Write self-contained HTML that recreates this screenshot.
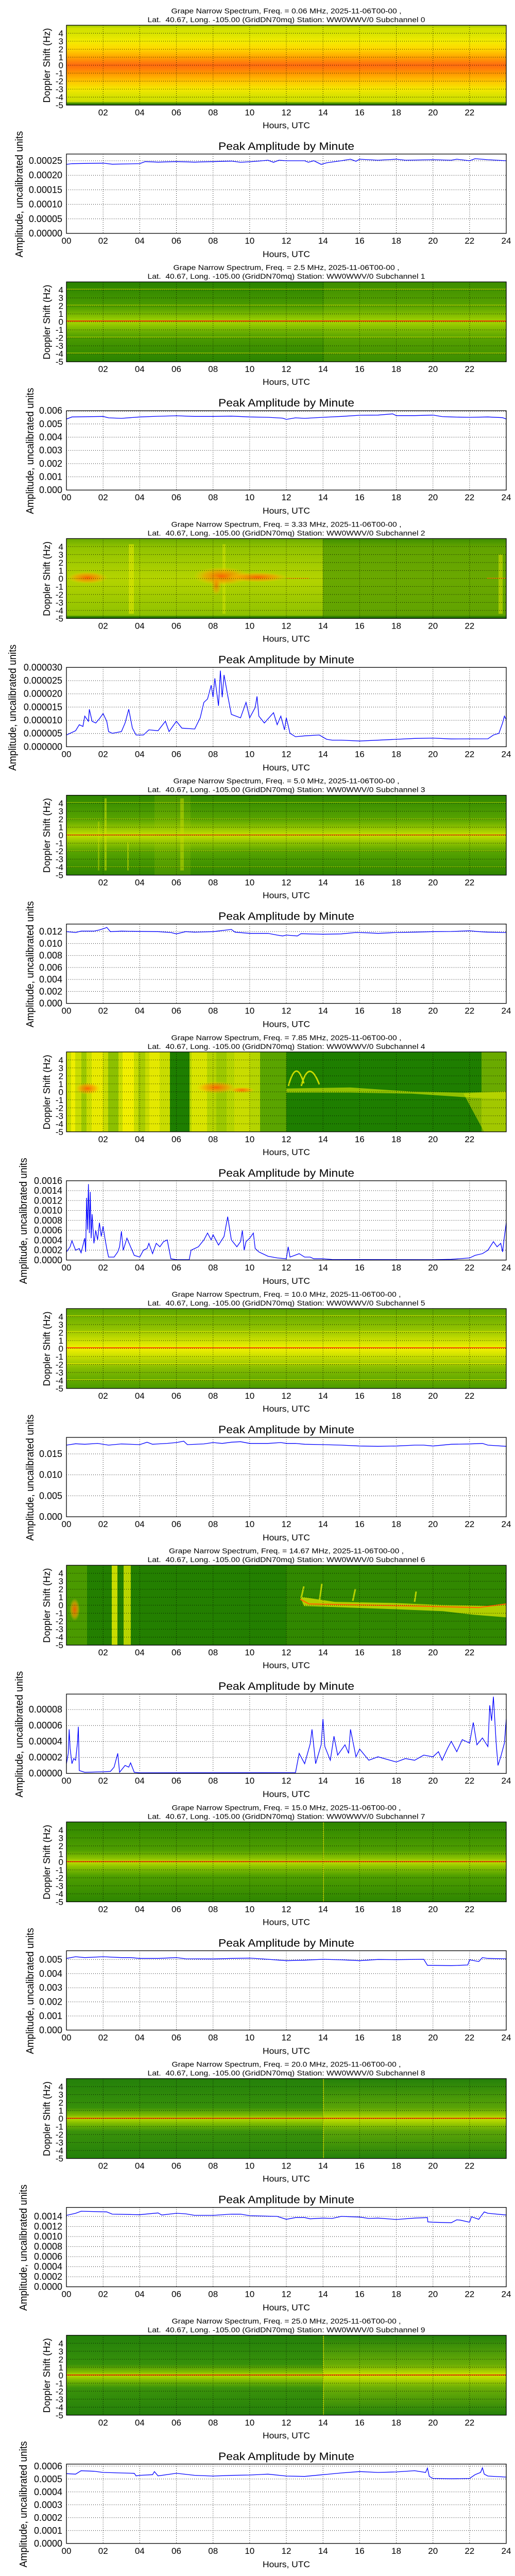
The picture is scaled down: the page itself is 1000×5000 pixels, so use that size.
<!DOCTYPE html>
<html><head><meta charset="utf-8">
<style>
html,body{margin:0;padding:0;background:#fff;}
svg{display:block;}
text{font-family:"Liberation Sans",sans-serif;fill:#000;}
.t{font-size:14px;text-anchor:middle;white-space:pre;}
.yl text{font-size:17px;text-anchor:end;}
.xl text{font-size:17px;text-anchor:middle;}
.ly text{font-size:18px;text-anchor:end;}
.ax{font-size:17px;text-anchor:middle;}
.pt{font-size:21px;text-anchor:middle;}
.dl{font-size:18px;text-anchor:middle;}
.al{font-size:20px;text-anchor:middle;}
.grid line{stroke:#000;stroke-width:1;stroke-dasharray:1,3;}
.ln{fill:none;stroke:#0000ff;stroke-width:1.3;}
</style></head>
<body>
<svg width="1000" height="5000" viewBox="0 0 1000 5000" xmlns="http://www.w3.org/2000/svg">
<defs>
<clipPath id="sc"><rect x="129" y="49" width="854" height="155"/></clipPath>
<clipPath id="lc"><rect x="129" y="299" width="854" height="154"/></clipPath>
<linearGradient id="g0" x1="0" y1="0" x2="0" y2="1">
<stop offset="0" stop-color="#9cc800"/><stop offset="0.04" stop-color="#d4e200"/><stop offset="0.1" stop-color="#d6e200"/><stop offset="0.2" stop-color="#f2ec00"/><stop offset="0.3" stop-color="#ffd600"/><stop offset="0.4" stop-color="#ffa400"/><stop offset="0.5" stop-color="#ff6a10"/><stop offset="0.6" stop-color="#ff9600"/><stop offset="0.7" stop-color="#ffc400"/><stop offset="0.8" stop-color="#f4e800"/><stop offset="0.9" stop-color="#d4e000"/><stop offset="0.955" stop-color="#d0e000"/><stop offset="0.975" stop-color="#4a9400"/><stop offset="1" stop-color="#1a6a00"/>
</linearGradient>
<linearGradient id="g1" x1="0" y1="0" x2="0" y2="1">
<stop offset="0" stop-color="#2a8200"/><stop offset="0.3" stop-color="#4a9a00"/><stop offset="0.44" stop-color="#88c200"/><stop offset="0.5" stop-color="#a8d400"/><stop offset="0.56" stop-color="#88c200"/><stop offset="0.7" stop-color="#4a9a00"/><stop offset="1" stop-color="#2a8200"/>
</linearGradient>
<linearGradient id="g2" x1="0" y1="0" x2="0" y2="1">
<stop offset="0" stop-color="#6aaa00"/><stop offset="0.1" stop-color="#90c200"/><stop offset="0.5" stop-color="#b4d400"/><stop offset="0.9" stop-color="#94c400"/><stop offset="0.96" stop-color="#8cc000"/><stop offset="0.98" stop-color="#2a7a00"/><stop offset="1" stop-color="#1e6e00"/>
</linearGradient>
<linearGradient id="g2b" x1="0" y1="0" x2="0" y2="1">
<stop offset="0" stop-color="#3e8e00"/><stop offset="0.1" stop-color="#62a400"/><stop offset="0.5" stop-color="#6aa800"/><stop offset="0.9" stop-color="#62a400"/><stop offset="0.96" stop-color="#5ea000"/><stop offset="0.98" stop-color="#2a7a00"/><stop offset="1" stop-color="#1e6e00"/>
</linearGradient>
<linearGradient id="g3" x1="0" y1="0" x2="0" y2="1">
<stop offset="0" stop-color="#2e8600"/><stop offset="0.3" stop-color="#58a400"/><stop offset="0.44" stop-color="#a0cc00"/><stop offset="0.5" stop-color="#c4e000"/><stop offset="0.56" stop-color="#a0cc00"/><stop offset="0.7" stop-color="#58a400"/><stop offset="1" stop-color="#2e8600"/>
</linearGradient>
<linearGradient id="g5" x1="0" y1="0" x2="0" y2="1">
<stop offset="0" stop-color="#5aa400"/><stop offset="0.25" stop-color="#90c200"/><stop offset="0.42" stop-color="#d4e400"/><stop offset="0.5" stop-color="#f2f000"/><stop offset="0.58" stop-color="#d0e200"/><stop offset="0.75" stop-color="#84bc00"/><stop offset="1" stop-color="#4c9c00"/>
</linearGradient>
<linearGradient id="g7" x1="0" y1="0" x2="0" y2="1">
<stop offset="0" stop-color="#2e8600"/><stop offset="0.35" stop-color="#4e9e00"/><stop offset="0.46" stop-color="#8cc400"/><stop offset="0.5" stop-color="#c0dc00"/><stop offset="0.56" stop-color="#8cc400"/><stop offset="0.68" stop-color="#4e9e00"/><stop offset="1" stop-color="#2e8600"/>
</linearGradient>
<linearGradient id="g8" x1="0" y1="0" x2="0" y2="1">
<stop offset="0" stop-color="#24800a"/><stop offset="0.36" stop-color="#36900a"/><stop offset="0.46" stop-color="#80bc00"/><stop offset="0.5" stop-color="#b8da00"/><stop offset="0.56" stop-color="#80bc00"/><stop offset="0.66" stop-color="#3a920a"/><stop offset="1" stop-color="#24800a"/>
</linearGradient>
<linearGradient id="gb" x1="0" y1="0" x2="0" y2="1">
<stop offset="0" stop-color="#b0d400" stop-opacity="0"/><stop offset="0.4" stop-color="#b0d400" stop-opacity="0.45"/><stop offset="0.5" stop-color="#d0e400" stop-opacity="0.8"/><stop offset="0.62" stop-color="#b0d400" stop-opacity="0.45"/><stop offset="1" stop-color="#b0d400" stop-opacity="0"/>
</linearGradient>
<radialGradient id="ob" cx="0.5" cy="0.5" r="0.5">
<stop offset="0" stop-color="#ff5a00" stop-opacity="0.9"/><stop offset="0.6" stop-color="#ff9a00" stop-opacity="0.6"/><stop offset="1" stop-color="#ffd000" stop-opacity="0"/>
</radialGradient>
<g id="sg">
<g class="grid">
<line x1="200.2" y1="49" x2="200.2" y2="204"/><line x1="271.3" y1="49" x2="271.3" y2="204"/><line x1="342.5" y1="49" x2="342.5" y2="204"/><line x1="413.7" y1="49" x2="413.7" y2="204"/><line x1="484.8" y1="49" x2="484.8" y2="204"/><line x1="556" y1="49" x2="556" y2="204"/><line x1="627.2" y1="49" x2="627.2" y2="204"/><line x1="698.3" y1="49" x2="698.3" y2="204"/><line x1="769.5" y1="49" x2="769.5" y2="204"/><line x1="840.7" y1="49" x2="840.7" y2="204"/><line x1="911.8" y1="49" x2="911.8" y2="204"/>
<line x1="129" y1="64.5" x2="983" y2="64.5"/><line x1="129" y1="80" x2="983" y2="80"/><line x1="129" y1="95.5" x2="983" y2="95.5"/><line x1="129" y1="111" x2="983" y2="111"/><line x1="129" y1="126.5" x2="983" y2="126.5"/><line x1="129" y1="142" x2="983" y2="142"/><line x1="129" y1="157.5" x2="983" y2="157.5"/><line x1="129" y1="173" x2="983" y2="173"/><line x1="129" y1="188.5" x2="983" y2="188.5"/>
</g>
<rect x="129" y="49" width="854" height="155" fill="none" stroke="#000" stroke-width="1.3"/>
</g>
<g id="lgx" class="grid">
<line x1="200.2" y1="299" x2="200.2" y2="453"/><line x1="271.3" y1="299" x2="271.3" y2="453"/><line x1="342.5" y1="299" x2="342.5" y2="453"/><line x1="413.7" y1="299" x2="413.7" y2="453"/><line x1="484.8" y1="299" x2="484.8" y2="453"/><line x1="556" y1="299" x2="556" y2="453"/><line x1="627.2" y1="299" x2="627.2" y2="453"/><line x1="698.3" y1="299" x2="698.3" y2="453"/><line x1="769.5" y1="299" x2="769.5" y2="453"/><line x1="840.7" y1="299" x2="840.7" y2="453"/><line x1="911.8" y1="299" x2="911.8" y2="453"/>
</g>
<rect id="lf" x="129" y="299" width="854" height="154" fill="none" stroke="#000" stroke-width="1.3"/>
</defs>

<!-- ================= PANEL 0 ================= -->
<g transform="translate(0,0)">
<text class="t" x="556" y="26" textLength="447" lengthAdjust="spacingAndGlyphs">Grape Narrow Spectrum, Freq. = 0.06 MHz, 2025-11-06T00-00 ,</text>
<text class="t" x="556" y="43" textLength="539" lengthAdjust="spacingAndGlyphs">Lat.  40.67, Long. -105.00 (GridDN70mq) Station: WW0WWV/0 Subchannel 0</text>
<g clip-path="url(#sc)"><rect x="129" y="49" width="854" height="155" fill="url(#g0)"/></g>
<use href="#sg"/>
<g class="yl"><text x="123" y="70.5">4</text><text x="123" y="86">3</text><text x="123" y="101.5">2</text><text x="123" y="117">1</text><text x="123" y="132.5">0</text><text x="123" y="148">-1</text><text x="123" y="163.5">-2</text><text x="123" y="179">-3</text><text x="123" y="194.5">-4</text><text x="123" y="210">-5</text></g>
<g class="xl"><text x="200.2" y="224">02</text><text x="271.3" y="224">04</text><text x="342.5" y="224">06</text><text x="413.7" y="224">08</text><text x="484.8" y="224">10</text><text x="556" y="224">12</text><text x="627.2" y="224">14</text><text x="698.3" y="224">16</text><text x="769.5" y="224">18</text><text x="840.7" y="224">20</text><text x="911.8" y="224">22</text></g>
<text class="ax" x="556" y="249" textLength="92" lengthAdjust="spacingAndGlyphs">Hours, UTC</text>
<text class="dl" transform="translate(97,127) rotate(-90)" textLength="145" lengthAdjust="spacingAndGlyphs">Doppler Shift (Hz)</text>
<text class="pt" x="556" y="291" textLength="264" lengthAdjust="spacingAndGlyphs">Peak Amplitude by Minute</text>
<use href="#lgx"/>
<g class="grid"><line x1="129" y1="424.8" x2="983" y2="424.8"/><line x1="129" y1="396.6" x2="983" y2="396.6"/><line x1="129" y1="368.4" x2="983" y2="368.4"/><line x1="129" y1="340.2" x2="983" y2="340.2"/><line x1="129" y1="312" x2="983" y2="312"/></g>
<g clip-path="url(#lc)"><g transform="translate(129,0) scale(35.583,0.33333)"><polyline class="ln" vector-effect="non-scaling-stroke" points="0,957 0.3,953 2,950 2.5,956 4,953 4.3,941 5,944 6,941 7,944 8,941 9,938 9.5,945 10,942 10.5,938 11,933 11.3,945 11.6,933 12,936 13,936 13.2,945 13.5,936 13.9,957 14.2,948 15,936 15.5,927 15.8,939 16,927 17,933 18,927 18.5,933 20,930 21,933 21.3,927 22,936 22.3,924 23,930 24,936"/></g></g>
<use href="#lf"/>
<g class="ly"><text x="121" y="459">0.00000</text><text x="121" y="430.8">0.00005</text><text x="121" y="402.6">0.00010</text><text x="121" y="374.4">0.00015</text><text x="121" y="346.2">0.00020</text><text x="121" y="318">0.00025</text></g>
<g class="xl"><text x="129" y="473">00</text><text x="200.2" y="473">02</text><text x="271.3" y="473">04</text><text x="342.5" y="473">06</text><text x="413.7" y="473">08</text><text x="484.8" y="473">10</text><text x="556" y="473">12</text><text x="627.2" y="473">14</text><text x="698.3" y="473">16</text><text x="769.5" y="473">18</text><text x="840.7" y="473">20</text><text x="911.8" y="473">22</text><text x="983" y="473">24</text></g>
<text class="ax" x="556" y="499" textLength="92" lengthAdjust="spacingAndGlyphs">Hours, UTC</text>
<text class="al" transform="translate(44,377) rotate(-90)" textLength="245" lengthAdjust="spacingAndGlyphs">Amplitude, uncalibrated units</text>
</g>

<!-- ================= PANEL 1 ================= -->
<g transform="translate(0,498.2)">
<text class="t" x="556" y="26" textLength="439" lengthAdjust="spacingAndGlyphs">Grape Narrow Spectrum, Freq. = 2.5 MHz, 2025-11-06T00-00 ,</text>
<text class="t" x="556" y="43" textLength="539" lengthAdjust="spacingAndGlyphs">Lat.  40.67, Long. -105.00 (GridDN70mq) Station: WW0WWV/0 Subchannel 1</text>
<g clip-path="url(#sc)"><rect x="129" y="49" width="854" height="155" fill="url(#g1)"/>
<rect x="629" y="49" width="354" height="155" fill="#a8d000" opacity="0.15"/>
<line x1="129" y1="63" x2="983" y2="63" stroke="#c8dc00" stroke-width="1"/><line x1="129" y1="94" x2="983" y2="94" stroke="#c8dc00" stroke-width="1"/><line x1="129" y1="156" x2="983" y2="156" stroke="#c8dc00" stroke-width="1"/><line x1="129" y1="187" x2="983" y2="187" stroke="#c8dc00" stroke-width="1"/>
<line x1="129" y1="125" x2="983" y2="125" stroke="#ff1a00" stroke-width="1.6"/></g>
<use href="#sg"/>
<g class="yl"><text x="123" y="70.5">4</text><text x="123" y="86">3</text><text x="123" y="101.5">2</text><text x="123" y="117">1</text><text x="123" y="132.5">0</text><text x="123" y="148">-1</text><text x="123" y="163.5">-2</text><text x="123" y="179">-3</text><text x="123" y="194.5">-4</text><text x="123" y="210">-5</text></g>
<g class="xl"><text x="200.2" y="224">02</text><text x="271.3" y="224">04</text><text x="342.5" y="224">06</text><text x="413.7" y="224">08</text><text x="484.8" y="224">10</text><text x="556" y="224">12</text><text x="627.2" y="224">14</text><text x="698.3" y="224">16</text><text x="769.5" y="224">18</text><text x="840.7" y="224">20</text><text x="911.8" y="224">22</text></g>
<text class="ax" x="556" y="249" textLength="92" lengthAdjust="spacingAndGlyphs">Hours, UTC</text>
<text class="dl" transform="translate(97,127) rotate(-90)" textLength="145" lengthAdjust="spacingAndGlyphs">Doppler Shift (Hz)</text>
<text class="pt" x="556" y="291" textLength="264" lengthAdjust="spacingAndGlyphs">Peak Amplitude by Minute</text>
<use href="#lgx"/>
<g class="grid"><line x1="129" y1="427.3" x2="983" y2="427.3"/><line x1="129" y1="401.7" x2="983" y2="401.7"/><line x1="129" y1="376" x2="983" y2="376"/><line x1="129" y1="350.3" x2="983" y2="350.3"/><line x1="129" y1="324.7" x2="983" y2="324.7"/><line x1="129" y1="300" x2="983" y2="300"/></g>
<g clip-path="url(#lc)"><g transform="translate(129,1.8) scale(35.583,0.33333)"><polyline class="ln" vector-effect="non-scaling-stroke" points="0,940 0.3,928 2,925 2.3,933 3,936 4,928 5,924 6,921 7,925 8,925 9,923 10,928 11,930 11.8,935 12,942 12.5,933 13,936 14,930 15,925 16,918 17,917 17.8,910 18,920 19,920 20,917 20.5,926 21,928 22,930 23,928 23.8,932 24,940"/></g></g>
<use href="#lf"/>
<g class="ly"><text x="121" y="459">0.000</text><text x="121" y="433.3">0.001</text><text x="121" y="407.7">0.002</text><text x="121" y="382">0.003</text><text x="121" y="356.3">0.004</text><text x="121" y="330.7">0.005</text><text x="121" y="305">0.006</text></g>
<g class="xl"><text x="129" y="473">00</text><text x="200.2" y="473">02</text><text x="271.3" y="473">04</text><text x="342.5" y="473">06</text><text x="413.7" y="473">08</text><text x="484.8" y="473">10</text><text x="556" y="473">12</text><text x="627.2" y="473">14</text><text x="698.3" y="473">16</text><text x="769.5" y="473">18</text><text x="840.7" y="473">20</text><text x="911.8" y="473">22</text><text x="983" y="473">24</text></g>
<text class="ax" x="556" y="499" textLength="92" lengthAdjust="spacingAndGlyphs">Hours, UTC</text>
<text class="al" transform="translate(65,377) rotate(-90)" textLength="245" lengthAdjust="spacingAndGlyphs">Amplitude, uncalibrated units</text>
</g>

<!-- ================= PANEL 2 ================= -->
<g transform="translate(0,996.4)">
<text class="t" x="556" y="26" textLength="447" lengthAdjust="spacingAndGlyphs">Grape Narrow Spectrum, Freq. = 3.33 MHz, 2025-11-06T00-00 ,</text>
<text class="t" x="556" y="43" textLength="539" lengthAdjust="spacingAndGlyphs">Lat.  40.67, Long. -105.00 (GridDN70mq) Station: WW0WWV/0 Subchannel 2</text>
<g clip-path="url(#sc)"><rect x="129" y="49" width="500" height="155" fill="url(#g2)"/><rect x="627" y="49" width="356" height="155" fill="url(#g2b)"/>
<rect x="250" y="60" width="10" height="135" fill="#e0e800" opacity="0.6"/>
<rect x="432" y="60" width="6" height="135" fill="#d8e600" opacity="0.5"/>
<rect x="968" y="80" width="8" height="115" fill="#d0e000" opacity="0.6"/>
<ellipse cx="170" cy="125" rx="40" ry="12" fill="url(#ob)"/>
<ellipse cx="430" cy="122" rx="55" ry="18" fill="url(#ob)"/>
<ellipse cx="420" cy="140" rx="10" ry="20" fill="url(#ob)" opacity="0.7"/>
<ellipse cx="500" cy="124" rx="60" ry="10" fill="url(#ob)"/>
<line x1="556" y1="126" x2="600" y2="126" stroke="#ff8000" stroke-width="1"/>
<line x1="945" y1="126" x2="983" y2="126" stroke="#ff8000" stroke-width="1.3"/></g>
<use href="#sg"/>
<g class="yl"><text x="123" y="70.5">4</text><text x="123" y="86">3</text><text x="123" y="101.5">2</text><text x="123" y="117">1</text><text x="123" y="132.5">0</text><text x="123" y="148">-1</text><text x="123" y="163.5">-2</text><text x="123" y="179">-3</text><text x="123" y="194.5">-4</text><text x="123" y="210">-5</text></g>
<g class="xl"><text x="200.2" y="224">02</text><text x="271.3" y="224">04</text><text x="342.5" y="224">06</text><text x="413.7" y="224">08</text><text x="484.8" y="224">10</text><text x="556" y="224">12</text><text x="627.2" y="224">14</text><text x="698.3" y="224">16</text><text x="769.5" y="224">18</text><text x="840.7" y="224">20</text><text x="911.8" y="224">22</text></g>
<text class="ax" x="556" y="249" textLength="92" lengthAdjust="spacingAndGlyphs">Hours, UTC</text>
<text class="dl" transform="translate(97,127) rotate(-90)" textLength="145" lengthAdjust="spacingAndGlyphs">Doppler Shift (Hz)</text>
<text class="pt" x="556" y="291" textLength="264" lengthAdjust="spacingAndGlyphs">Peak Amplitude by Minute</text>
<use href="#lgx"/>
<g class="grid"><line x1="129" y1="427.3" x2="983" y2="427.3"/><line x1="129" y1="401.7" x2="983" y2="401.7"/><line x1="129" y1="376" x2="983" y2="376"/><line x1="129" y1="350.3" x2="983" y2="350.3"/><line x1="129" y1="324.7" x2="983" y2="324.7"/></g>
<g clip-path="url(#lc)"><g transform="translate(129,3.6) scale(35.583,0.33333)"><polyline class="ln" vector-effect="non-scaling-stroke" points="0,1280 0.5,1255 0.7,1220 0.9,1230 1.0,1170 1.2,1200 1.25,1130 1.4,1200 1.6,1210 1.8,1185 2.0,1155 2.2,1200 2.3,1260 2.5,1270 3,1260 3.2,1210 3.4,1130 3.6,1240 3.8,1280 4.2,1280 4.5,1250 5,1255 5.4,1200 5.6,1260 6,1200 6.3,1240 7,1245 7.3,1180 7.5,1090 7.7,1070 7.9,990 8.0,1060 8.1,950 8.3,1110 8.4,905 8.5,1060 8.6,930 8.8,1050 9,1160 9.5,1180 9.8,1090 10,1180 10.3,1120 10.4,1055 10.5,1170 10.8,1210 11.3,1150 11.5,1220 11.7,1170 11.9,1250 12,1180 12.2,1270 12.5,1290 13,1285 13.8,1280 14.2,1305 14.5,1310 15,1310 16,1315 18,1305 19,1300 20,1298 21,1303 23,1302 23.3,1280 23.6,1270 23.8,1210 23.9,1170 24,1190"/></g></g>
<use href="#lf"/>
<g class="ly"><text x="121" y="459">0.000000</text><text x="121" y="433.3">0.000005</text><text x="121" y="407.7">0.000010</text><text x="121" y="382">0.000015</text><text x="121" y="356.3">0.000020</text><text x="121" y="330.7">0.000025</text><text x="121" y="305">0.000030</text></g>
<g class="xl"><text x="129" y="473">00</text><text x="200.2" y="473">02</text><text x="271.3" y="473">04</text><text x="342.5" y="473">06</text><text x="413.7" y="473">08</text><text x="484.8" y="473">10</text><text x="556" y="473">12</text><text x="627.2" y="473">14</text><text x="698.3" y="473">16</text><text x="769.5" y="473">18</text><text x="840.7" y="473">20</text><text x="911.8" y="473">22</text><text x="983" y="473">24</text></g>
<text class="ax" x="556" y="499" textLength="92" lengthAdjust="spacingAndGlyphs">Hours, UTC</text>
<text class="al" transform="translate(31,377) rotate(-90)" textLength="245" lengthAdjust="spacingAndGlyphs">Amplitude, uncalibrated units</text>
</g>

<!-- ================= PANEL 3 ================= -->
<g transform="translate(0,1494.6)">
<text class="t" x="556" y="26" textLength="439" lengthAdjust="spacingAndGlyphs">Grape Narrow Spectrum, Freq. = 5.0 MHz, 2025-11-06T00-00 ,</text>
<text class="t" x="556" y="43" textLength="539" lengthAdjust="spacingAndGlyphs">Lat.  40.67, Long. -105.00 (GridDN70mq) Station: WW0WWV/0 Subchannel 3</text>
<g clip-path="url(#sc)"><rect x="129" y="49" width="854" height="155" fill="url(#g3)"/>
<rect x="300" y="49" width="70" height="155" fill="#b0d400" opacity="0.18"/>
<rect x="203" y="55" width="4" height="140" fill="#d0e000" opacity="0.55"/><rect x="190" y="100" width="3" height="95" fill="#d0e000" opacity="0.4"/><rect x="247" y="140" width="3" height="55" fill="#d0e000" opacity="0.5"/><rect x="350" y="55" width="7" height="140" fill="#c8dc00" opacity="0.5"/>
<line x1="129" y1="63" x2="983" y2="63" stroke="#c0d800" stroke-width="0.8"/><line x1="129" y1="95" x2="983" y2="95" stroke="#c0d800" stroke-width="0.8"/><line x1="129" y1="157" x2="983" y2="157" stroke="#c0d800" stroke-width="0.8"/><line x1="129" y1="188" x2="983" y2="188" stroke="#c0d800" stroke-width="0.8"/>
<line x1="129" y1="126" x2="983" y2="126" stroke="#ff2000" stroke-width="1.2"/></g>
<use href="#sg"/>
<g class="yl"><text x="123" y="70.5">4</text><text x="123" y="86">3</text><text x="123" y="101.5">2</text><text x="123" y="117">1</text><text x="123" y="132.5">0</text><text x="123" y="148">-1</text><text x="123" y="163.5">-2</text><text x="123" y="179">-3</text><text x="123" y="194.5">-4</text><text x="123" y="210">-5</text></g>
<g class="xl"><text x="200.2" y="224">02</text><text x="271.3" y="224">04</text><text x="342.5" y="224">06</text><text x="413.7" y="224">08</text><text x="484.8" y="224">10</text><text x="556" y="224">12</text><text x="627.2" y="224">14</text><text x="698.3" y="224">16</text><text x="769.5" y="224">18</text><text x="840.7" y="224">20</text><text x="911.8" y="224">22</text></g>
<text class="ax" x="556" y="249" textLength="92" lengthAdjust="spacingAndGlyphs">Hours, UTC</text>
<text class="dl" transform="translate(97,127) rotate(-90)" textLength="145" lengthAdjust="spacingAndGlyphs">Doppler Shift (Hz)</text>
<text class="pt" x="556" y="291" textLength="264" lengthAdjust="spacingAndGlyphs">Peak Amplitude by Minute</text>
<use href="#lgx"/>
<g class="grid"><line x1="129" y1="429.8" x2="983" y2="429.8"/><line x1="129" y1="406.5" x2="983" y2="406.5"/><line x1="129" y1="383.3" x2="983" y2="383.3"/><line x1="129" y1="360" x2="983" y2="360"/><line x1="129" y1="336.8" x2="983" y2="336.8"/><line x1="129" y1="313.5" x2="983" y2="313.5"/></g>
<g clip-path="url(#lc)"><g transform="translate(129,5.4) scale(35.583,0.33333)"><polyline class="ln" vector-effect="non-scaling-stroke" points="0,925 0.5,930 0.8,922 1.5,922 1.8,915 2.1,905 2.2,900 2.4,925 3,922 5,925 5.7,930 6,938 6.5,925 7,928 8,925 9,912 9.2,928 10,935 11,935 11.5,945 11.8,950 12,945 12.6,950 12.8,937 14,940 15,938 15.8,930 16.5,932 17,935 18,930 19,928 20,925 21,924 22,920 22.5,925 23,928 24,930"/></g></g>
<use href="#lf"/>
<g class="ly"><text x="121" y="459">0.000</text><text x="121" y="435.8">0.002</text><text x="121" y="412.5">0.004</text><text x="121" y="389.3">0.006</text><text x="121" y="366">0.008</text><text x="121" y="342.8">0.010</text><text x="121" y="319.5">0.012</text></g>
<g class="xl"><text x="129" y="473">00</text><text x="200.2" y="473">02</text><text x="271.3" y="473">04</text><text x="342.5" y="473">06</text><text x="413.7" y="473">08</text><text x="484.8" y="473">10</text><text x="556" y="473">12</text><text x="627.2" y="473">14</text><text x="698.3" y="473">16</text><text x="769.5" y="473">18</text><text x="840.7" y="473">20</text><text x="911.8" y="473">22</text><text x="983" y="473">24</text></g>
<text class="ax" x="556" y="499" textLength="92" lengthAdjust="spacingAndGlyphs">Hours, UTC</text>
<text class="al" transform="translate(65,377) rotate(-90)" textLength="245" lengthAdjust="spacingAndGlyphs">Amplitude, uncalibrated units</text>
</g>

<!-- ================= PANEL 4 ================= -->
<g transform="translate(0,1992.8)">
<text class="t" x="556" y="26" textLength="447" lengthAdjust="spacingAndGlyphs">Grape Narrow Spectrum, Freq. = 7.85 MHz, 2025-11-06T00-00 ,</text>
<text class="t" x="556" y="43" textLength="539" lengthAdjust="spacingAndGlyphs">Lat.  40.67, Long. -105.00 (GridDN70mq) Station: WW0WWV/0 Subchannel 4</text>
<g clip-path="url(#sc)"><rect x="129" y="49" width="854" height="155" fill="#1e7e00"/>
<rect x="129" y="49" width="201" height="155" fill="#c8dc00"/>
<rect x="138" y="49" width="8" height="155" fill="#eeee00"/><rect x="158" y="49" width="10" height="155" fill="#9cc800"/><rect x="178" y="49" width="22" height="155" fill="#e8ea00"/><rect x="210" y="49" width="20" height="155" fill="#8cc000"/><rect x="238" y="49" width="22" height="155" fill="#f0ee00"/><rect x="268" y="49" width="14" height="155" fill="#a8cc00"/><rect x="290" y="49" width="20" height="155" fill="#e4e800"/>
<rect x="368" y="49" width="188" height="155" fill="#b4d400"/>
<rect x="372" y="49" width="30" height="155" fill="#d8e400"/><rect x="420" y="49" width="20" height="155" fill="#9cc800"/><rect x="455" y="49" width="30" height="155" fill="#c8dc00"/><rect x="505" y="49" width="51" height="155" fill="#5aa400"/>
<ellipse cx="170" cy="120" rx="25" ry="12" fill="url(#ob)"/><ellipse cx="420" cy="118" rx="40" ry="12" fill="url(#ob)"/><ellipse cx="470" cy="123" rx="25" ry="6" fill="url(#ob)"/>
<path d="M556,120 L680,118 L800,126 L900,128 L983,126 L983,140 L920,138 L800,130 L680,128 L556,128 Z" fill="#b8d800" opacity="0.75"/>
<path d="M560,115 Q575,60 590,110 M585,115 Q600,60 620,112" stroke="#c8dc00" stroke-width="3" fill="none"/>
<rect x="935" y="49" width="48" height="155" fill="#9cc800" opacity="0.6"/>
<path d="M900,130 L983,126 L983,204 L940,204 Z" fill="#c8dc00" opacity="0.6"/></g>
<use href="#sg"/>
<g class="yl"><text x="123" y="70.5">4</text><text x="123" y="86">3</text><text x="123" y="101.5">2</text><text x="123" y="117">1</text><text x="123" y="132.5">0</text><text x="123" y="148">-1</text><text x="123" y="163.5">-2</text><text x="123" y="179">-3</text><text x="123" y="194.5">-4</text><text x="123" y="210">-5</text></g>
<g class="xl"><text x="200.2" y="224">02</text><text x="271.3" y="224">04</text><text x="342.5" y="224">06</text><text x="413.7" y="224">08</text><text x="484.8" y="224">10</text><text x="556" y="224">12</text><text x="627.2" y="224">14</text><text x="698.3" y="224">16</text><text x="769.5" y="224">18</text><text x="840.7" y="224">20</text><text x="911.8" y="224">22</text></g>
<text class="ax" x="556" y="249" textLength="92" lengthAdjust="spacingAndGlyphs">Hours, UTC</text>
<text class="dl" transform="translate(97,127) rotate(-90)" textLength="145" lengthAdjust="spacingAndGlyphs">Doppler Shift (Hz)</text>
<text class="pt" x="556" y="291" textLength="264" lengthAdjust="spacingAndGlyphs">Peak Amplitude by Minute</text>
<use href="#lgx"/>
<g class="grid"><line x1="129" y1="433.75" x2="983" y2="433.75"/><line x1="129" y1="414.5" x2="983" y2="414.5"/><line x1="129" y1="395.25" x2="983" y2="395.25"/><line x1="129" y1="376" x2="983" y2="376"/><line x1="129" y1="356.75" x2="983" y2="356.75"/><line x1="129" y1="337.5" x2="983" y2="337.5"/><line x1="129" y1="318.25" x2="983" y2="318.25"/></g>
<g clip-path="url(#lc)"><g transform="translate(129,7.2) scale(35.583,0.33333)"><polyline class="ln" vector-effect="non-scaling-stroke" points="0,1290 0.2,1260 0.3,1225 0.5,1280 0.7,1270 0.8,1295 1.0,1210 1.05,1290 1.1,975 1.15,1160 1.2,895 1.25,1180 1.3,940 1.35,1210 1.4,1070 1.5,1240 1.6,1165 1.7,1220 1.8,1120 1.9,1200 2,1140 2.1,1210 2.2,1270 2.3,1320 2.6,1320 2.8,1290 2.9,1260 3.0,1170 3.1,1280 3.3,1210 3.5,1260 3.7,1310 4,1320 4.2,1280 4.4,1270 4.5,1240 4.7,1300 4.9,1240 5.1,1260 5.3,1230 5.5,1220 5.7,1330 6,1335 6.7,1335 6.8,1280 7.2,1260 7.5,1220 7.7,1180 7.9,1220 8,1190 8.3,1250 8.6,1200 8.8,1085 9,1220 9.3,1260 9.5,1230 9.6,1165 9.7,1280 9.8,1230 10.0,1210 10.2,1180 10.3,1270 10.5,1290 11,1315 11.5,1325 12,1330 12.1,1260 12.2,1320 12.7,1300 13,1320 13.3,1320 13.5,1330 14,1330 14.5,1334 20,1335 21,1333 22,1325 22.3,1310 22.7,1300 23,1280 23.3,1230 23.5,1260 23.7,1240 23.8,1290 23.9,1200 24,1120"/></g></g>
<use href="#lf"/>
<g class="ly"><text x="121" y="459">0.0000</text><text x="121" y="439.75">0.0002</text><text x="121" y="420.5">0.0004</text><text x="121" y="401.25">0.0006</text><text x="121" y="382">0.0008</text><text x="121" y="362.75">0.0010</text><text x="121" y="343.5">0.0012</text><text x="121" y="324.25">0.0014</text><text x="121" y="305">0.0016</text></g>
<g class="xl"><text x="129" y="473">00</text><text x="200.2" y="473">02</text><text x="271.3" y="473">04</text><text x="342.5" y="473">06</text><text x="413.7" y="473">08</text><text x="484.8" y="473">10</text><text x="556" y="473">12</text><text x="627.2" y="473">14</text><text x="698.3" y="473">16</text><text x="769.5" y="473">18</text><text x="840.7" y="473">20</text><text x="911.8" y="473">22</text><text x="983" y="473">24</text></g>
<text class="ax" x="556" y="499" textLength="92" lengthAdjust="spacingAndGlyphs">Hours, UTC</text>
<text class="al" transform="translate(52,377) rotate(-90)" textLength="245" lengthAdjust="spacingAndGlyphs">Amplitude, uncalibrated units</text>
</g>

<!-- ================= PANEL 5 ================= -->
<g transform="translate(0,2491)">
<text class="t" x="556" y="26" textLength="445" lengthAdjust="spacingAndGlyphs">Grape Narrow Spectrum, Freq. = 10.0 MHz, 2025-11-06T00-00 ,</text>
<text class="t" x="556" y="43" textLength="539" lengthAdjust="spacingAndGlyphs">Lat.  40.67, Long. -105.00 (GridDN70mq) Station: WW0WWV/0 Subchannel 5</text>
<g clip-path="url(#sc)"><rect x="129" y="49" width="854" height="155" fill="url(#g5)"/>
<line x1="129" y1="63" x2="983" y2="63" stroke="#e0e800" stroke-width="1"/><line x1="129" y1="94" x2="983" y2="94" stroke="#e8ea00" stroke-width="1"/><line x1="129" y1="156" x2="983" y2="156" stroke="#e8ea00" stroke-width="1.2"/><line x1="129" y1="187" x2="983" y2="187" stroke="#e0e800" stroke-width="1"/>
<line x1="129" y1="125" x2="983" y2="125" stroke="#ff2000" stroke-width="1.6"/></g>
<use href="#sg"/>
<g class="yl"><text x="123" y="70.5">4</text><text x="123" y="86">3</text><text x="123" y="101.5">2</text><text x="123" y="117">1</text><text x="123" y="132.5">0</text><text x="123" y="148">-1</text><text x="123" y="163.5">-2</text><text x="123" y="179">-3</text><text x="123" y="194.5">-4</text><text x="123" y="210">-5</text></g>
<g class="xl"><text x="200.2" y="224">02</text><text x="271.3" y="224">04</text><text x="342.5" y="224">06</text><text x="413.7" y="224">08</text><text x="484.8" y="224">10</text><text x="556" y="224">12</text><text x="627.2" y="224">14</text><text x="698.3" y="224">16</text><text x="769.5" y="224">18</text><text x="840.7" y="224">20</text><text x="911.8" y="224">22</text></g>
<text class="ax" x="556" y="249" textLength="92" lengthAdjust="spacingAndGlyphs">Hours, UTC</text>
<text class="dl" transform="translate(97,127) rotate(-90)" textLength="145" lengthAdjust="spacingAndGlyphs">Doppler Shift (Hz)</text>
<text class="pt" x="556" y="291" textLength="264" lengthAdjust="spacingAndGlyphs">Peak Amplitude by Minute</text>
<use href="#lgx"/>
<g class="grid"><line x1="129" y1="412.3" x2="983" y2="412.3"/><line x1="129" y1="371.6" x2="983" y2="371.6"/><line x1="129" y1="331" x2="983" y2="331"/></g>
<g clip-path="url(#lc)"><g transform="translate(129,9) scale(35.583,0.33333)"><polyline class="ln" vector-effect="non-scaling-stroke" points="0,915 0.5,907 1,910 1.7,905 2.3,915 3,908 4,912 4.4,898 4.7,910 5,908 5.5,905 6,900 6.4,892 6.6,912 7.5,908 8,900 8.5,905 9,898 9.5,895 10,905 11,905 11.7,900 12,905 12.5,905 13,910 14,912 15,915 16,920 17,922 18,920 19,915 19.5,915 20,920 21,910 22,908 22.7,905 23,915 24,922"/></g></g>
<use href="#lf"/>
<g class="ly"><text x="121" y="459">0.000</text><text x="121" y="418.3">0.005</text><text x="121" y="377.6">0.010</text><text x="121" y="337">0.015</text></g>
<g class="xl"><text x="129" y="473">00</text><text x="200.2" y="473">02</text><text x="271.3" y="473">04</text><text x="342.5" y="473">06</text><text x="413.7" y="473">08</text><text x="484.8" y="473">10</text><text x="556" y="473">12</text><text x="627.2" y="473">14</text><text x="698.3" y="473">16</text><text x="769.5" y="473">18</text><text x="840.7" y="473">20</text><text x="911.8" y="473">22</text><text x="983" y="473">24</text></g>
<text class="ax" x="556" y="499" textLength="92" lengthAdjust="spacingAndGlyphs">Hours, UTC</text>
<text class="al" transform="translate(65,377) rotate(-90)" textLength="245" lengthAdjust="spacingAndGlyphs">Amplitude, uncalibrated units</text>
</g>

<!-- ================= PANEL 6 ================= -->
<g transform="translate(0,2989.2)">
<text class="t" x="556" y="26" textLength="456" lengthAdjust="spacingAndGlyphs">Grape Narrow Spectrum, Freq. = 14.67 MHz, 2025-11-06T00-00 ,</text>
<text class="t" x="556" y="43" textLength="539" lengthAdjust="spacingAndGlyphs">Lat.  40.67, Long. -105.00 (GridDN70mq) Station: WW0WWV/0 Subchannel 6</text>
<g clip-path="url(#sc)"><rect x="129" y="49" width="854" height="155" fill="#237f00"/>
<rect x="129" y="49" width="40" height="155" fill="#4a9a00"/>
<ellipse cx="145" cy="135" rx="10" ry="22" fill="url(#ob)"/>
<rect x="217" y="49" width="11" height="155" fill="#c8dc00"/><rect x="240" y="49" width="14" height="155" fill="#b8d400"/>
<rect x="556" y="49" width="427" height="155" fill="#3a8e00" opacity="0.6"/>
<path d="M583,110 L650,120 L760,122 L860,126 L960,128 L983,125 L983,150 L920,145 L860,138 L760,134 L650,130 L590,128 Z" fill="#c8dc00" opacity="0.85"/>
<path d="M583,115 L600,124 L700,126 L800,128 L880,130 L930,131 L983,124" stroke="#ff6a00" stroke-width="2.2" fill="none"/>
<path d="M585,112 L590,90 M620,120 L625,85 M685,118 L690,95 M805,120 L808,100" stroke="#b8d400" stroke-width="3" fill="none"/></g>
<use href="#sg"/>
<g class="yl"><text x="123" y="70.5">4</text><text x="123" y="86">3</text><text x="123" y="101.5">2</text><text x="123" y="117">1</text><text x="123" y="132.5">0</text><text x="123" y="148">-1</text><text x="123" y="163.5">-2</text><text x="123" y="179">-3</text><text x="123" y="194.5">-4</text><text x="123" y="210">-5</text></g>
<g class="xl"><text x="200.2" y="224">02</text><text x="271.3" y="224">04</text><text x="342.5" y="224">06</text><text x="413.7" y="224">08</text><text x="484.8" y="224">10</text><text x="556" y="224">12</text><text x="627.2" y="224">14</text><text x="698.3" y="224">16</text><text x="769.5" y="224">18</text><text x="840.7" y="224">20</text><text x="911.8" y="224">22</text></g>
<text class="ax" x="556" y="249" textLength="92" lengthAdjust="spacingAndGlyphs">Hours, UTC</text>
<text class="dl" transform="translate(97,127) rotate(-90)" textLength="145" lengthAdjust="spacingAndGlyphs">Doppler Shift (Hz)</text>
<text class="pt" x="556" y="291" textLength="264" lengthAdjust="spacingAndGlyphs">Peak Amplitude by Minute</text>
<use href="#lgx"/>
<g class="grid"><line x1="129" y1="422" x2="983" y2="422"/><line x1="129" y1="391" x2="983" y2="391"/><line x1="129" y1="360" x2="983" y2="360"/><line x1="129" y1="329" x2="983" y2="329"/></g>
<g clip-path="url(#lc)"><g transform="translate(129,0.8) scale(35.583,0.33333)"><polyline class="ln" vector-effect="non-scaling-stroke" points="0,1300 0.1,1240 0.15,1100 0.2,1210 0.3,1300 0.4,1270 0.5,1280 0.6,1180 0.65,1085 0.7,1340 1,1350 2,1347 2.4,1345 2.6,1320 2.8,1240 2.9,1350 3.2,1310 3.4,1320 3.5,1295 3.7,1350 4,1353 12.5,1352 12.7,1240 13,1300 13.3,1185 13.4,1100 13.6,1300 13.9,1190 14,1040 14.1,1200 14.4,1280 14.6,1140 14.8,1250 15.2,1190 15.4,1240 15.5,1100 15.8,1260 16,1215 16.5,1280 17,1260 18,1290 18.5,1270 19,1280 19.5,1250 20,1260 20.3,1230 20.5,1280 20.8,1210 21,1170 21.3,1230 21.6,1160 22,1180 22.2,1060 22.4,1190 22.7,1150 23,1200 23.1,960 23.2,1050 23.3,910 23.45,1180 23.55,1310 23.7,1260 23.9,1180 24,1040"/></g></g>
<use href="#lf"/>
<g class="ly"><text x="121" y="459">0.00000</text><text x="121" y="428">0.00002</text><text x="121" y="397">0.00004</text><text x="121" y="366">0.00006</text><text x="121" y="335">0.00008</text></g>
<g class="xl"><text x="129" y="473">00</text><text x="200.2" y="473">02</text><text x="271.3" y="473">04</text><text x="342.5" y="473">06</text><text x="413.7" y="473">08</text><text x="484.8" y="473">10</text><text x="556" y="473">12</text><text x="627.2" y="473">14</text><text x="698.3" y="473">16</text><text x="769.5" y="473">18</text><text x="840.7" y="473">20</text><text x="911.8" y="473">22</text><text x="983" y="473">24</text></g>
<text class="ax" x="556" y="499" textLength="92" lengthAdjust="spacingAndGlyphs">Hours, UTC</text>
<text class="al" transform="translate(44,377) rotate(-90)" textLength="245" lengthAdjust="spacingAndGlyphs">Amplitude, uncalibrated units</text>
</g>

<!-- ================= PANEL 7 ================= -->
<g transform="translate(0,3487.4)">
<text class="t" x="556" y="26" textLength="445" lengthAdjust="spacingAndGlyphs">Grape Narrow Spectrum, Freq. = 15.0 MHz, 2025-11-06T00-00 ,</text>
<text class="t" x="556" y="43" textLength="539" lengthAdjust="spacingAndGlyphs">Lat.  40.67, Long. -105.00 (GridDN70mq) Station: WW0WWV/0 Subchannel 7</text>
<g clip-path="url(#sc)"><rect x="129" y="49" width="854" height="155" fill="url(#g7)"/>
<rect x="627" y="49" width="2" height="155" fill="#c8dc00" opacity="0.7"/>
<line x1="129" y1="126" x2="983" y2="126" stroke="#ff1a00" stroke-width="1.6"/></g>
<use href="#sg"/>
<g class="yl"><text x="123" y="70.5">4</text><text x="123" y="86">3</text><text x="123" y="101.5">2</text><text x="123" y="117">1</text><text x="123" y="132.5">0</text><text x="123" y="148">-1</text><text x="123" y="163.5">-2</text><text x="123" y="179">-3</text><text x="123" y="194.5">-4</text><text x="123" y="210">-5</text></g>
<g class="xl"><text x="200.2" y="224">02</text><text x="271.3" y="224">04</text><text x="342.5" y="224">06</text><text x="413.7" y="224">08</text><text x="484.8" y="224">10</text><text x="556" y="224">12</text><text x="627.2" y="224">14</text><text x="698.3" y="224">16</text><text x="769.5" y="224">18</text><text x="840.7" y="224">20</text><text x="911.8" y="224">22</text></g>
<text class="ax" x="556" y="249" textLength="92" lengthAdjust="spacingAndGlyphs">Hours, UTC</text>
<text class="dl" transform="translate(97,127) rotate(-90)" textLength="145" lengthAdjust="spacingAndGlyphs">Doppler Shift (Hz)</text>
<text class="pt" x="556" y="291" textLength="264" lengthAdjust="spacingAndGlyphs">Peak Amplitude by Minute</text>
<use href="#lgx"/>
<g class="grid"><line x1="129" y1="425.6" x2="983" y2="425.6"/><line x1="129" y1="398.2" x2="983" y2="398.2"/><line x1="129" y1="370.8" x2="983" y2="370.8"/><line x1="129" y1="343.4" x2="983" y2="343.4"/><line x1="129" y1="316" x2="983" y2="316"/></g>
<g clip-path="url(#lc)"><g transform="translate(129,0.6) scale(35.583,0.33333)"><polyline class="ln" vector-effect="non-scaling-stroke" points="0,940 0.5,930 1,935 2,930 3,935 3.5,935 4,940 5,940 6,935 6.5,942 8,943 9,940 10,938 11,945 12,953 13,950 14,945 15,948 16,953 17,946 18,947 19.5,945 19.7,980 20,980 21,982 21.9,978 22,948 22.5,958 22.7,935 23,940 24,942"/></g></g>
<use href="#lf"/>
<g class="ly"><text x="121" y="459">0.000</text><text x="121" y="431.6">0.001</text><text x="121" y="404.2">0.002</text><text x="121" y="376.8">0.003</text><text x="121" y="349.4">0.004</text><text x="121" y="322">0.005</text></g>
<g class="xl"><text x="129" y="473">00</text><text x="200.2" y="473">02</text><text x="271.3" y="473">04</text><text x="342.5" y="473">06</text><text x="413.7" y="473">08</text><text x="484.8" y="473">10</text><text x="556" y="473">12</text><text x="627.2" y="473">14</text><text x="698.3" y="473">16</text><text x="769.5" y="473">18</text><text x="840.7" y="473">20</text><text x="911.8" y="473">22</text><text x="983" y="473">24</text></g>
<text class="ax" x="556" y="499" textLength="92" lengthAdjust="spacingAndGlyphs">Hours, UTC</text>
<text class="al" transform="translate(65,377) rotate(-90)" textLength="245" lengthAdjust="spacingAndGlyphs">Amplitude, uncalibrated units</text>
</g>

<!-- ================= PANEL 8 ================= -->
<g transform="translate(0,3985.6)">
<text class="t" x="556" y="26" textLength="445" lengthAdjust="spacingAndGlyphs">Grape Narrow Spectrum, Freq. = 20.0 MHz, 2025-11-06T00-00 ,</text>
<text class="t" x="556" y="43" textLength="539" lengthAdjust="spacingAndGlyphs">Lat.  40.67, Long. -105.00 (GridDN70mq) Station: WW0WWV/0 Subchannel 8</text>
<g clip-path="url(#sc)"><rect x="129" y="49" width="854" height="155" fill="url(#g8)"/>
<rect x="627" y="49" width="356" height="155" fill="url(#gb)" opacity="0.7"/>
<rect x="627" y="49" width="2" height="155" fill="#c8dc00" opacity="0.7"/>
<line x1="129" y1="126" x2="983" y2="126" stroke="#ff1a00" stroke-width="1.6"/></g>
<use href="#sg"/>
<g class="yl"><text x="123" y="70.5">4</text><text x="123" y="86">3</text><text x="123" y="101.5">2</text><text x="123" y="117">1</text><text x="123" y="132.5">0</text><text x="123" y="148">-1</text><text x="123" y="163.5">-2</text><text x="123" y="179">-3</text><text x="123" y="194.5">-4</text><text x="123" y="210">-5</text></g>
<g class="xl"><text x="200.2" y="224">02</text><text x="271.3" y="224">04</text><text x="342.5" y="224">06</text><text x="413.7" y="224">08</text><text x="484.8" y="224">10</text><text x="556" y="224">12</text><text x="627.2" y="224">14</text><text x="698.3" y="224">16</text><text x="769.5" y="224">18</text><text x="840.7" y="224">20</text><text x="911.8" y="224">22</text></g>
<text class="ax" x="556" y="249" textLength="92" lengthAdjust="spacingAndGlyphs">Hours, UTC</text>
<text class="dl" transform="translate(97,127) rotate(-90)" textLength="145" lengthAdjust="spacingAndGlyphs">Doppler Shift (Hz)</text>
<text class="pt" x="556" y="291" textLength="264" lengthAdjust="spacingAndGlyphs">Peak Amplitude by Minute</text>
<use href="#lgx"/>
<g class="grid"><line x1="129" y1="433.5" x2="983" y2="433.5"/><line x1="129" y1="414" x2="983" y2="414"/><line x1="129" y1="394.5" x2="983" y2="394.5"/><line x1="129" y1="375" x2="983" y2="375"/><line x1="129" y1="355.5" x2="983" y2="355.5"/><line x1="129" y1="336" x2="983" y2="336"/><line x1="129" y1="316.5" x2="983" y2="316.5"/></g>
<g clip-path="url(#lc)"><g transform="translate(129,0.4) scale(35.583,0.33333)"><polyline class="ln" vector-effect="non-scaling-stroke" points="0,942 0.5,930 0.8,918 2.2,922 2.5,935 3.5,937 4,938 5,928 5.2,940 6,930 6.5,933 7,942 8,942 9,935 9.5,935 10,944 11.5,948 12,965 12.5,955 13,955 13.3,962 14,958 14.5,960 15,948 16,952 16.5,960 17,958 18,966 19,958 19.7,955 19.72,980 20,982 21,985 21.3,968 21.5,970 22,982 22.1,950 22.5,965 22.6,950 22.8,922 23,930 24,940"/></g></g>
<use href="#lf"/>
<g class="ly"><text x="121" y="459">0.0000</text><text x="121" y="439.5">0.0002</text><text x="121" y="420">0.0004</text><text x="121" y="400.5">0.0006</text><text x="121" y="381">0.0008</text><text x="121" y="361.5">0.0010</text><text x="121" y="342">0.0012</text><text x="121" y="322.5">0.0014</text></g>
<g class="xl"><text x="129" y="473">00</text><text x="200.2" y="473">02</text><text x="271.3" y="473">04</text><text x="342.5" y="473">06</text><text x="413.7" y="473">08</text><text x="484.8" y="473">10</text><text x="556" y="473">12</text><text x="627.2" y="473">14</text><text x="698.3" y="473">16</text><text x="769.5" y="473">18</text><text x="840.7" y="473">20</text><text x="911.8" y="473">22</text><text x="983" y="473">24</text></g>
<text class="ax" x="556" y="499" textLength="92" lengthAdjust="spacingAndGlyphs">Hours, UTC</text>
<text class="al" transform="translate(52,377) rotate(-90)" textLength="245" lengthAdjust="spacingAndGlyphs">Amplitude, uncalibrated units</text>
</g>

<!-- ================= PANEL 9 ================= -->
<g transform="translate(0,4483.8)">
<text class="t" x="556" y="26" textLength="445" lengthAdjust="spacingAndGlyphs">Grape Narrow Spectrum, Freq. = 25.0 MHz, 2025-11-06T00-00 ,</text>
<text class="t" x="556" y="43" textLength="539" lengthAdjust="spacingAndGlyphs">Lat.  40.67, Long. -105.00 (GridDN70mq) Station: WW0WWV/0 Subchannel 9</text>
<g clip-path="url(#sc)"><rect x="129" y="49" width="854" height="155" fill="url(#g8)"/>
<rect x="627" y="49" width="356" height="155" fill="url(#gb)"/>
<rect x="627" y="49" width="2" height="155" fill="#c8dc00" opacity="0.7"/>
<line x1="129" y1="126" x2="983" y2="126" stroke="#ff1a00" stroke-width="1.6"/></g>
<use href="#sg"/>
<g class="yl"><text x="123" y="70.5">4</text><text x="123" y="86">3</text><text x="123" y="101.5">2</text><text x="123" y="117">1</text><text x="123" y="132.5">0</text><text x="123" y="148">-1</text><text x="123" y="163.5">-2</text><text x="123" y="179">-3</text><text x="123" y="194.5">-4</text><text x="123" y="210">-5</text></g>
<g class="xl"><text x="200.2" y="224">02</text><text x="271.3" y="224">04</text><text x="342.5" y="224">06</text><text x="413.7" y="224">08</text><text x="484.8" y="224">10</text><text x="556" y="224">12</text><text x="627.2" y="224">14</text><text x="698.3" y="224">16</text><text x="769.5" y="224">18</text><text x="840.7" y="224">20</text><text x="911.8" y="224">22</text></g>
<text class="ax" x="556" y="249" textLength="92" lengthAdjust="spacingAndGlyphs">Hours, UTC</text>
<text class="dl" transform="translate(97,127) rotate(-90)" textLength="145" lengthAdjust="spacingAndGlyphs">Doppler Shift (Hz)</text>
<text class="pt" x="556" y="291" textLength="264" lengthAdjust="spacingAndGlyphs">Peak Amplitude by Minute</text>
<use href="#lgx"/>
<g class="grid"><line x1="129" y1="428" x2="983" y2="428"/><line x1="129" y1="403" x2="983" y2="403"/><line x1="129" y1="378" x2="983" y2="378"/><line x1="129" y1="353" x2="983" y2="353"/><line x1="129" y1="328" x2="983" y2="328"/><line x1="129" y1="303" x2="983" y2="303"/></g>
<g clip-path="url(#lc)"><g transform="translate(129,0.2) scale(35.583,0.33333)"><polyline class="ln" vector-effect="non-scaling-stroke" points="0,952 0.5,955 0.8,935 1.5,938 2,945 3,948 3.7,950 3.8,965 4,962 4.7,958 4.8,940 5,965 6,950 7,962 8,966 9,962 10,960 11,955 12,966 13,968 14,958 15,948 16,940 17,945 18,942 19,935 19.6,945 19.7,920 19.8,968 20,980 21,982 22,980 22.3,958 22.6,945 22.7,918 22.8,955 23,966 24,972"/></g></g>
<use href="#lf"/>
<g class="ly"><text x="121" y="459">0.0000</text><text x="121" y="434">0.0001</text><text x="121" y="409">0.0002</text><text x="121" y="384">0.0003</text><text x="121" y="359">0.0004</text><text x="121" y="334">0.0005</text><text x="121" y="309">0.0006</text></g>
<g class="xl"><text x="129" y="473">00</text><text x="200.2" y="473">02</text><text x="271.3" y="473">04</text><text x="342.5" y="473">06</text><text x="413.7" y="473">08</text><text x="484.8" y="473">10</text><text x="556" y="473">12</text><text x="627.2" y="473">14</text><text x="698.3" y="473">16</text><text x="769.5" y="473">18</text><text x="840.7" y="473">20</text><text x="911.8" y="473">22</text><text x="983" y="473">24</text></g>
<text class="ax" x="556" y="499" textLength="92" lengthAdjust="spacingAndGlyphs">Hours, UTC</text>
<text class="al" transform="translate(52,377) rotate(-90)" textLength="245" lengthAdjust="spacingAndGlyphs">Amplitude, uncalibrated units</text>
</g>
</svg>
</body></html>
